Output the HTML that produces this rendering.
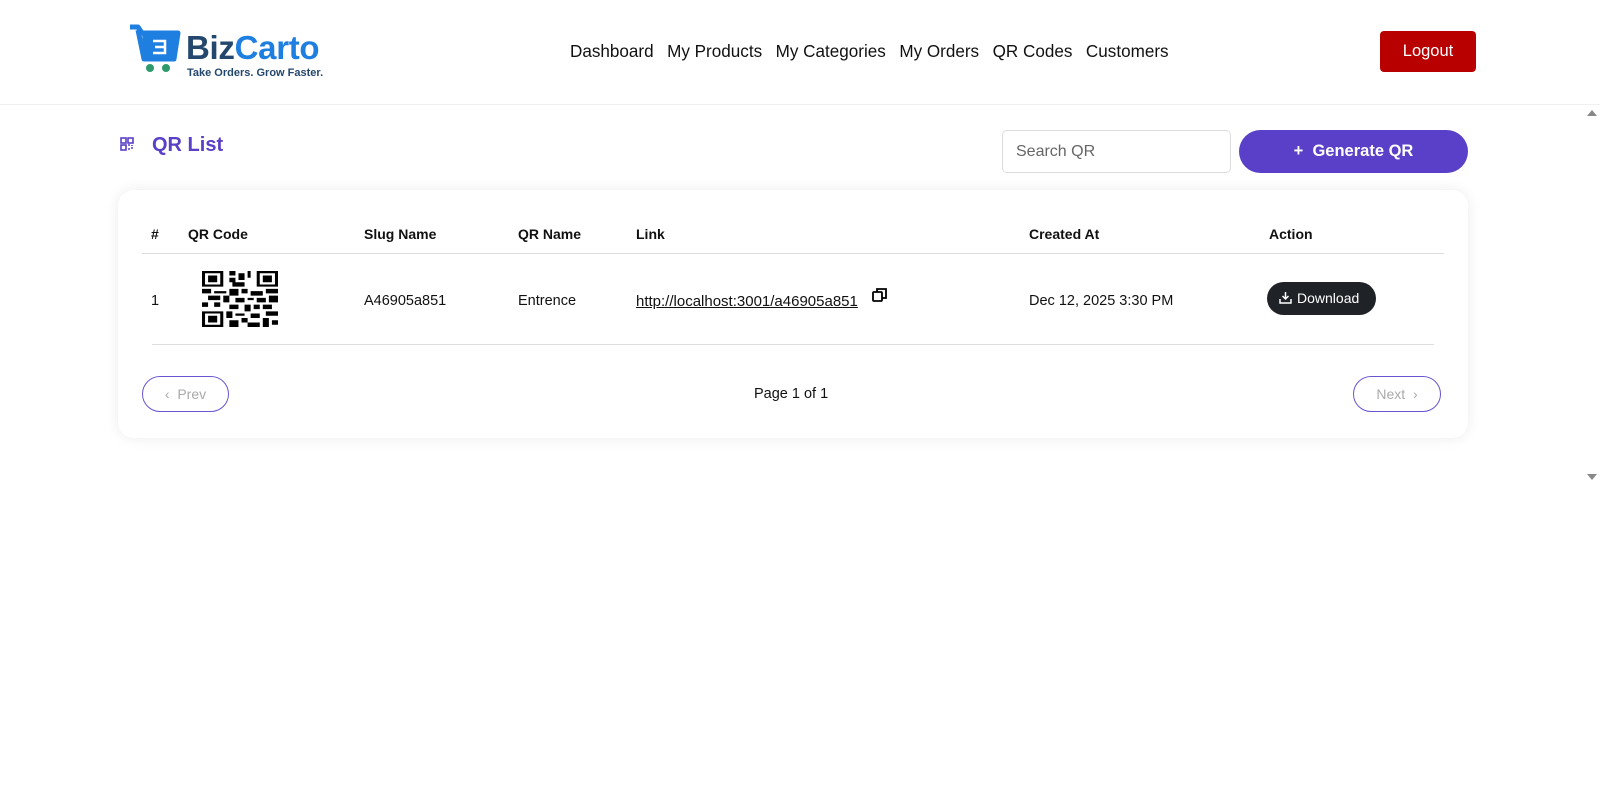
<!DOCTYPE html>
<html><head><meta charset="utf-8"><style>
*{box-sizing:border-box;margin:0;padding:0}
body{width:1600px;height:808px;background:#fff;font-family:"Liberation Sans",sans-serif;color:#111;position:relative;overflow:hidden}
.hdr{height:105px;border-bottom:1px solid #f0f0f0;position:relative}
.nav{position:absolute;left:570px;top:42px;font-size:17.1px;color:#111}
.nav span{margin-right:13.5px}
.logout{position:absolute;left:1380px;top:31px;width:96px;height:41px;background:#b80000;color:#fff;border-radius:4px;font-size:16.5px;text-align:center;line-height:41px}
.title{position:absolute;left:152px;top:134px;font-size:20px;font-weight:bold;color:#5a3fc8}
.search{position:absolute;left:1002px;top:130px;width:229px;height:43px;border:1px solid #ddd;border-radius:5px;font-size:16px;color:#666;padding:12px 13px}
.gen{position:absolute;left:1239px;top:130px;width:229px;height:43px;border-radius:22px;background:#5a3fc8;color:#fff;font-size:16.5px;font-weight:bold;text-align:center;line-height:43px}
.card{position:absolute;left:118px;top:190px;width:1350px;height:248px;border-radius:16px;box-shadow:0 0 14px rgba(0,0,0,.08);background:#fff}
.th{position:absolute;top:36px;font-size:14px;font-weight:bold}
.td{position:absolute;top:103px;font-size:14.5px}
.pill{position:absolute;top:186px;height:36px;border:1px solid #6a55d0;border-radius:18px;color:#aaa;font-size:14px;text-align:center;line-height:34px}
</style></head><body>
<div class="hdr">
<svg style="position:absolute;left:128px;top:24px" width="60" height="50" viewBox="0 0 60 50"><path d="M2 3h8l4 6h36l-4 26H16L10 6" fill="none" stroke="#1f7fe0" stroke-width="5" stroke-linejoin="round"/><path d="M14 9h36l-4 26H16z" fill="#1f7fe0"/><path d="M25 17h12v12H25M27 23h9" fill="none" stroke="#fff" stroke-width="2.5"/><circle cx="22" cy="44" r="4" fill="#2e9a6b"/><circle cx="38" cy="44" r="4" fill="#2e9a6b"/></svg>
<div style="position:absolute;left:186px;top:29px;font-size:33px;font-weight:bold;letter-spacing:-0.3px"><span style="color:#24476e">Biz</span><span style="color:#1f7fe0">Carto</span></div>
<div style="position:absolute;left:187px;top:67px;font-size:11px;font-weight:bold;color:#24476e">Take Orders. Grow Faster.</div>
<div class="nav"><span>Dashboard</span><span>My Products</span><span>My Categories</span><span>My Orders</span><span>QR Codes</span><span>Customers</span></div>
<div class="logout">Logout</div>
</div>
<svg style="position:absolute;left:120px;top:137px" width="14" height="14" viewBox="0 0 14 14" fill="none" stroke="#5a3fc8" stroke-width="1.6"><rect x="1" y="1" width="5" height="5"/><rect x="8" y="1" width="5" height="5"/><rect x="1" y="8" width="5" height="5"/><path d="M8 8h2M11 11h2M8 12h2M12 8v1" /></svg>
<div class="title">QR List</div>
<div class="search">Search QR</div>
<div class="gen">+&nbsp; Generate QR</div>
<div class="card">
<div class="th" style="left:33px">#</div><div class="th" style="left:70px">QR Code</div><div class="th" style="left:246px">Slug Name</div><div class="th" style="left:400px">QR Name</div><div class="th" style="left:518px">Link</div><div class="th" style="left:911px">Created At</div><div class="th" style="left:1151px">Action</div>
<div style="position:absolute;left:24px;right:24px;top:63px;border-top:1px solid #ddd"></div>
<svg style="position:absolute;left:84px;top:81px" width="76" height="56" viewBox="0 0 25 25" preserveAspectRatio="none" fill="#000"><path d="M0 0h7v7H0zM1 1v5h5V1zM2 2h3v3H2zM18 0h7v7h-7zM19 1v5h5V1zM20 2h3v3h-3zM0 18h7v7H0zM1 19v5h5v-5zM2 20h3v3H2z" fill-rule="evenodd"/><path d="M9 0h2v2H9zM12 1h2v3h-2zM9 3h2v2H9zM15 0h1v3h-1zM10 5h4v2h-4zM0 8h3v2H0zM4 9h4v1H4zM9 8h3v3H9zM13 8h2v2h-2zM16 9h4v2h-4zM21 8h4v2h-4zM2 11h4v2H2zM7 11h2v3H7zM11 12h3v2h-3zM15 12h2v1h-2zM18 12h3v2h-3zM22 11h3v3h-3zM0 14h2v2H0zM4 14h2v2H4zM9 15h3v2H9zM14 15h2v3h-2zM17 15h2v2h-2zM20 15h3v2h-3zM8 18h2v3H8zM11 19h3v1h-3zM16 19h3v2h-3zM21 18h4v2h-4zM9 22h3v3H9zM13 21h2v2h-2zM15 23h4v2h-4zM20 21h2v4h-2zM23 22h2v2h-2z"/></svg>
<div class="td" style="left:33px">1</div><div class="td" style="left:246px">A46905a851</div><div class="td" style="left:400px">Entrence</div>
<div class="td" style="left:518px;text-decoration:underline;font-size:15px">http://localhost:3001/a46905a851</div>
<svg style="position:absolute;left:754px;top:97px" width="16" height="16" viewBox="0 0 16 16" fill="none" stroke="#000" stroke-width="1.8"><rect x="1" y="5" width="9" height="9" rx="1"/><path d="M5 5V2h9v9h-4"/></svg>
<div class="td" style="left:911px">Dec 12, 2025 3:30 PM</div>
<div style="position:absolute;left:1149px;top:92px;width:109px;height:33px;border-radius:17px;background:#1f2327;color:#fff;font-size:14px;line-height:33px;padding-left:30px">Download</div>
<svg style="position:absolute;left:1161px;top:101px" width="13" height="13" viewBox="0 0 13 13" fill="none" stroke="#fff" stroke-width="1.5"><path d="M6.5 1v7M3.5 5l3 3 3-3M1 8v4h11V8"/></svg>
<div style="position:absolute;left:34px;right:34px;top:154px;border-top:1px solid #ddd"></div>
<div class="pill" style="left:24px;width:87px">‹&nbsp; Prev</div>
<div style="position:absolute;left:636px;top:196px;font-size:14.5px">Page 1 of 1</div>
<div class="pill" style="left:1235px;width:88px">Next &nbsp;›</div>
</div>
<div style="position:absolute;left:1587px;top:110px;width:0;height:0;border:5px solid transparent;border-bottom:6px solid #888;border-top:0"></div>
<div style="position:absolute;left:1587px;top:474px;width:0;height:0;border:5px solid transparent;border-top:6px solid #888;border-bottom:0"></div>
</body></html>
